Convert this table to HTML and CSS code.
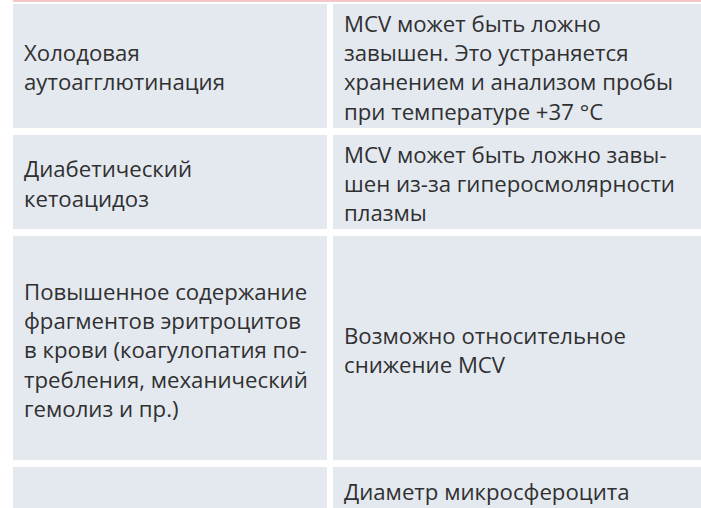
FILE: index.html
```html
<!DOCTYPE html>
<html lang="ru">
<head>
<meta charset="utf-8">
<title>MCV</title>
<link rel="stylesheet" href="styles.css">
</head>
<body>
<div class="table">
  <div class="top-rule"></div>
  <div class="row">
    <div class="cell">Холодовая<br>аутоагглютинация</div>
    <div class="cell">MCV может быть ложно<br>завышен. Это устраняется<br>хранением и анализом пробы<br>при температуре +37&nbsp;°C</div>
  </div>
  <div class="row">
    <div class="cell">Диабетический<br>кетоацидоз</div>
    <div class="cell">MCV может быть ложно завы-<br>шен из-за гиперосмолярности<br>плазмы</div>
  </div>
  <div class="row row-tall">
    <div class="cell">Повышенное содержание<br>фрагментов эритроцитов<br>в крови (коагулопатия по-<br>требления, механический<br>гемолиз и пр.)</div>
    <div class="cell">Возможно относительное<br>снижение MCV</div>
  </div>
  <div class="row row-last">
    <div class="cell"></div>
    <div class="cell cell-top">Диаметр микросфероцита</div>
  </div>
</div>
</body>
</html>
```

FILE: styles.css
```css
html, body {
  margin: 0;
  padding: 0;
  background: #ffffff;
  overflow: hidden;
}

.table {
  width: 720px;
  padding-left: 13px;
  font-family: "Open Sans", "Noto Sans", sans-serif;
  font-size: 22.2px;
  line-height: 29.2px;
  color: #303030;
}

.top-rule {
  height: 2px;
  background: #f3c7c7;
  margin-bottom: 2px;
}

.row {
  display: grid;
  grid-template-columns: 314px 1fr;
  column-gap: 6px;
  margin-bottom: 7px;
}

.cell {
  background: #e4e9f0;
  display: flex;
  align-items: center;
  padding: 5px 11px 2px;
  white-space: nowrap;
}

.row-tall {
  min-height: 224px;
}

.row-last {
  min-height: 50px;
}

.cell-top {
  align-items: flex-start;
  padding-top: 10px;
}
```
